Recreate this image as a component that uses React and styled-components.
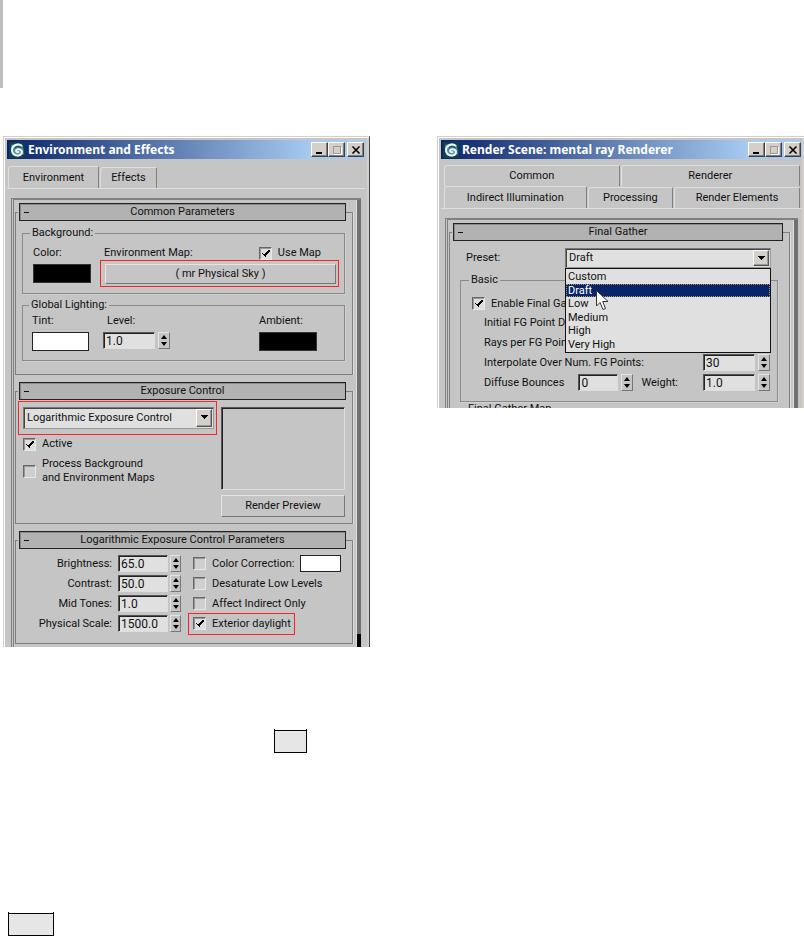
import React from "react";
import styled, { createGlobalStyle, css } from "styled-components";

const GlobalStyle = createGlobalStyle`
  *, *::before, *::after { box-sizing: border-box; }
  body {
    margin: 0;
    background: #fff;
    color: #111;
    font: 11px/14px Roboto, "Liberation Sans", sans-serif;
  }
  button, input, select { font: inherit; color: inherit; }
`;

const grey = "#c5c5c5";
const light = "#dedede";
const dark = "#808080";

const raised = css`
  border: 1px solid;
  border-color: #e4e4e4 #777 #777 #e4e4e4;
`;
const sunken = css`
  border: 1px solid;
  border-color: #555 ${light} ${light} #555;
  box-shadow: inset 1px 1px 0 #222;
`;

const Page = styled.main`
  display: flex;
  flex-direction: column;
`;
const Masthead = styled.header`
  height: 88px;
  margin-bottom: 48px;
  border-left: 3px solid #bfbfbf;
`;
const Figures = styled.section`
  display: grid;
  grid-template-columns: repeat(2, minmax(0, 1fr));
  align-items: start;
  column-gap: 67px;
  padding-left: 3px;
`;
const Window = styled.article`
  display: flex;
  flex-direction: column;
  padding: 3px ${(p) => (p.$cut ? "2px" : "4px")} 0 3px;
  background: ${grey};
  border-left: 1px solid #d4d0c8;
  border-right: ${(p) => (p.$cut ? "0" : "1px solid #444")};
  border-top: 1px solid #d4d0c8;
  box-shadow: inset 1px 1px 0 #fff, inset -2px 0 0 #d4d0c8;
`;
const TitleBar = styled.header`
  display: flex;
  align-items: center;
  height: 19px;
  padding: 0 1px 0 2px;
  background: linear-gradient(90deg, #0a246a, #a6caf0 85%);
`;
const Title = styled.h2`
  flex: 1;
  margin: 0 0 0 3px;
  color: #fff;
  font: bold 12px/18px "Noto Sans", sans-serif;
  white-space: nowrap;
`;
const CaptionButton = styled.button`
  display: grid;
  place-items: center;
  width: 17px;
  height: 15px;
  padding: 0;
  margin-left: ${(p) => (p.$apart ? "2px" : "0")};
  background: #d4d0c8;
  border: 1px solid;
  border-color: #fff #404040 #404040 #fff;
  box-shadow: inset -1px -1px 0 #808080;
`;

const Tabs = styled.div`
  display: flex;
  gap: 1px;
  padding: ${(p) => (p.$wide ? "0 2px 0 3px" : "0 4px 0 1px")};
  border-bottom: ${(p) => (p.$last ? `1px solid ${light}` : "0")};
`;
const TabArea = styled.nav`
  margin: ${(p) => (p.$tight ? "5px" : "7px")} 0 9px;
`;
const Tab = styled.button`
  flex: ${(p) => p.$grow || "0 0 auto"};
  width: ${(p) => p.$width || "auto"};
  height: ${(p) => (p.$active ? "22px" : "21px")};
  margin-top: ${(p) => (p.$active ? "0" : "1px")};
  margin-bottom: ${(p) => (p.$active ? "-1px" : "0")};
  padding: 0;
  white-space: nowrap;
  background: ${grey};
  border: 1px solid;
  border-color: ${light} ${dark} transparent ${light};
  border-bottom: 0;
  border-radius: 3px 2px 0 0;
`;

const Pane = styled.div`
  display: flex;
  margin: 0 4px 0 4px;
  border-top: 2px solid ${dark};
  border-left: 3px double ${dark};
`;
const PaneBody = styled.div`
  flex: 1;
  min-width: 0;
  display: flex;
  flex-direction: column;
  gap: 7px;
  padding: 3px 3px ${(p) => (p.$cut ? "0" : "3px")} 1px;
  border-right: 1px solid ${light};
`;
const Track = styled.div`
  display: flex;
  align-items: flex-end;
  width: 4px;
  background: #707070;
`;
const TrackEnd = styled.div`
  width: 4px;
  height: 13px;
  background: #000;
`;

const Rollout = styled.fieldset`
  min-width: 0;
  margin: 0;
  padding: 0 6px 0 2px;
  border: 1px solid ${dark};
  border-bottom-width: ${(p) => (p.$open ? "0" : "1px")};
  box-shadow: 1px 0 0 ${light};
`;
const RolloutLegend = styled.legend`
  width: 100%;
  padding: 0 0 0 1px;
`;
const RolloutHead = styled.button`
  display: grid;
  grid-template-columns: 12px 1fr 12px;
  align-items: center;
  width: 100%;
  height: 18px;
  padding: 0 4px;
  background: #b2b2b2;
  border: 1px solid #222;
  box-shadow: inset 1px 1px 0 #8a8a8a;
`;
const Dash = styled.span`
  width: 5px;
  height: 1px;
  background: #111;
`;

const Group = styled.fieldset`
  min-width: 0;
  margin: ${(p) => (p.$flush ? "0" : "0 1px 0 4px")};
  padding: ${(p) => p.$pad};
  border: 1px solid #8a8a8a;
  box-shadow: 1px 1px 0 #d0d0d0;
`;
const Legend = styled.legend`
  margin-left: -3px;
  padding: 0 2px;
  line-height: 12px;
`;
const Stack = styled.div`
  display: flex;
  flex-direction: column;
  gap: 5px;
  padding: 6px 0 13px;
`;

const Split = styled.div`
  display: grid;
  grid-template-columns: 67px minmax(0, 1fr);
`;
const Between = styled.div`
  display: flex;
  justify-content: space-between;
  height: 14px;
  padding: 0 18px 0 4px;
`;
const Lighting = styled.div`
  display: grid;
  grid-template-columns: 71px minmax(0, 1fr) 80px;
`;
const Column = styled.div`
  display: flex;
  flex-direction: column;
  align-items: flex-start;
  gap: 4px;
`;
const Label = styled.label`
  padding-left: ${(p) => (p.$inset ? "4px" : "0")};
  white-space: nowrap;
`;
const Swatch = styled.button`
  width: ${(p) => p.$width};
  height: ${(p) => p.$height || "19px"};
  padding: 0;
  background: ${(p) => p.$color};
  border: 1px solid ${(p) => (p.$color === "#000" ? "#333" : "#222")};
`;
const PushButton = styled.button`
  width: 100%;
  height: ${(p) => p.$height};
  padding: 0;
  background: ${grey};
  ${raised}
`;
const Marked = styled.div`
  padding: ${(p) => p.$pad};
  border: 1px solid #f22;
`;

const CheckLabel = styled.label`
  display: inline-flex;
  align-items: center;
  gap: 6px;
  white-space: nowrap;
`;
const MarkedCheck = styled(CheckLabel)`
  justify-self: start;
  margin: -2px 0 -2px -5px;
  padding: 3px 3px 3px 4px;
  border: 1px solid #f22;
`;
const Box = styled.input`
  appearance: none;
  flex: none;
  width: 13px;
  height: 13px;
  margin: 0;
  background: ${(p) => (p.defaultChecked ? light : "#cfcfcf")};
  border: 1px solid;
  border-color: #666 #e8e8e8 #e8e8e8 #666;
  box-shadow: inset 1px 1px 0 #999;
  &:checked {
    background-image: linear-gradient(45deg, transparent 0 34%, #000 34% 52%, transparent 52%),
      linear-gradient(-45deg, transparent 0 36%, #000 36% 60%, transparent 60%);
    background-size: 4px 5px, 6px 6px;
    background-position: 2px 4px, 4px 2px;
    background-repeat: no-repeat;
  }
`;

const NumberWrap = styled.span`
  display: flex;
  gap: ${(p) => (p.$tight ? "2px" : "3px")};
`;
const NumberInput = styled.input`
  width: ${(p) => p.$width};
  height: 17px;
  margin: 0;
  padding: 0 2px;
  font-size: 12px;
  line-height: 15px;
  background: #e0e0e0;
  border-radius: 0;
  ${sunken}
`;
const Spin = styled.span`
  display: flex;
  flex-direction: column;
  width: 12px;
  height: 17px;
  ${raised}
`;
const SpinButton = styled.button`
  flex: 1;
  display: grid;
  place-items: center;
  padding: 0;
  border: 0;
  background: transparent;
`;

const SelectWrap = styled.div`
  position: relative;
  display: flex;
  &::after {
    content: "";
    position: absolute;
    top: 2px;
    right: 2px;
    width: 16px;
    height: calc(100% - 4px);
    pointer-events: none;
    background: linear-gradient(#000, #000) 4px 5px / 7px 1px no-repeat,
      linear-gradient(#000, #000) 5px 6px / 5px 1px no-repeat,
      linear-gradient(#000, #000) 6px 7px / 3px 1px no-repeat,
      linear-gradient(#000, #000) 7px 8px / 1px 1px no-repeat, #d4d0c8;
    border: 1px solid;
    border-color: #fff #555 #555 #fff;
    box-shadow: inset -1px -1px 0 #999;
  }
`;
const Select = styled.select`
  appearance: none;
  width: 100%;
  height: ${(p) => p.$height};
  padding: 0 20px 0 3px;
  background: #e0e0e0;
  border: 1px solid;
  border-color: #777 #999 #999 #777;
  border-radius: 0;
  box-shadow: inset 1px 1px 0 #444;
`;

const Exposure = styled.div`
  display: grid;
  grid-template-columns: 199px minmax(0, 1fr);
  column-gap: 4px;
  padding: 1px 1px 6px 0;
`;
const Checks = styled.div`
  display: flex;
  flex-direction: column;
  align-items: flex-start;
  gap: 6px;
  padding: 2px 5px 0;
`;
const Preview = styled.div`
  display: flex;
  flex-direction: column;
  gap: 5px;
  padding-top: 6px;
`;
const PreviewWell = styled.div`
  height: 83px;
  ${sunken}
`;
const Params = styled.div`
  display: grid;
  grid-template-columns: 94px 63px minmax(0, 1fr);
  grid-auto-rows: 17px;
  align-items: center;
  gap: 3px 6px;
  padding: 6px 0 11px;
  & > label:nth-child(3n + 1) { justify-self: end; }
  & > :nth-child(3n) { padding-left: 6px; }
`;
const InlineRow = styled.div`
  display: flex;
  align-items: center;
  gap: ${(p) => (p.$wide ? "8px" : "5px")};
`;

const GatherStack = styled(Stack)`
  gap: 6px;
  padding: 7px 5px 0 8px;
`;
const PresetRow = styled.div`
  position: relative;
  display: grid;
  grid-template-columns: 99px minmax(0, 1fr);
  align-items: center;
  padding: 0 7px 0 6px;
`;
const Options = styled.ul`
  position: absolute;
  z-index: 1;
  top: 100%;
  left: 105px;
  right: 7px;
  display: grid;
  grid-auto-rows: 1fr;
  height: 85px;
  margin: 0;
  padding: 1px 0;
  list-style: none;
  line-height: 13px;
  background: #e0e0e0;
  border: 1px solid #111;
`;
const Option = styled.li`
  padding-left: 2px;
  color: ${(p) => (p.$selected ? "#fff" : "inherit")};
  background: ${(p) => (p.$selected ? "#0a246a" : "transparent")};
  outline: ${(p) => (p.$selected ? "1px dotted #a99c60" : "0")};
  outline-offset: -1px;
`;
const Pointer = styled.svg`
  position: absolute;
  z-index: 2;
  left: 136px;
  top: 42px;
`;
const Basic = styled.div`
  display: grid;
  grid-template-columns: minmax(0, 1fr) 67px;
  grid-template-rows: 15px;
  grid-auto-rows: 17px;
  row-gap: 3px;
  align-items: center;
  padding-left: 12px;
  & > ${CheckLabel} { grid-column: 1 / 3; margin-left: -12px; }
`;
const WideLabel = styled(Label)`
  grid-column: 1 / 3;
`;
const Bounces = styled.div`
  display: flex;
  align-items: center;
  justify-content: space-between;
  padding-right: 25px;
`;
const CutGroup = styled.div`
  height: 6px;
  margin-top: -6px;
  padding: 0 8px;
  overflow: hidden;
  line-height: 14px;
`;

const Notes = styled.section`
  display: flex;
  flex-direction: column;
  align-items: flex-start;
  gap: 159px;
  padding: 82px 0 0 8px;
`;
const Key = styled.div`
  width: ${(p) => p.$width};
  height: 24px;
  margin-left: ${(p) => p.$indent || "0"};
  border: solid #000;
  border-width: 0 1px 1px;
  background: linear-gradient(#fff 0 1px, #000 1px 2px, #e6e6e6 2px);
`;

function Logo() {
  return (
    <svg width="16" height="16" viewBox="0 0 16 16" aria-hidden="true">
      <rect width="16" height="16" rx="1" fill="#123f4e" />
      <path d="M2 3L9 1L14 4L15 12L9 15L3 13Z" fill="#4b8792" />
      <path d="M12.500 3.500C9 1.300 3.500 3 3 7.500C2.800 12 6.500 14 10 13.300C13.500 12.500 14 8.500 11 7.500C9 6.900 7 7.500 7 9C7 10.200 8.500 10.500 9.500 10" fill="none" stroke="#e9f5f6" strokeWidth="2" strokeLinecap="round" />
      <path d="M6 5.500C8 4 11 4.500 12.500 6" fill="none" stroke="#173f4a" strokeWidth="1" />
    </svg>
  );
}

function WindowTitle({ children }) {
  return (
    <TitleBar>
      <Logo />
      <Title>{children}</Title>
      <CaptionButton aria-label="Minimize">
        <svg width="12" height="10"><path d="M2 8h6" stroke="#000" strokeWidth="2" /></svg>
      </CaptionButton>
      <CaptionButton aria-label="Maximize" disabled>
        <svg width="12" height="10" fill="none"><path d="M2.500 1v7.500h7V1M2 1.500h8" stroke="#999" /><path d="M3 9.500h7.500V2" stroke="#fff" /></svg>
      </CaptionButton>
      <CaptionButton aria-label="Close" $apart>
        <svg width="12" height="10"><path d="M2.500 1.500l7 7M9.500 1.500l-7 7" stroke="#000" strokeWidth="1.600" /></svg>
      </CaptionButton>
    </TitleBar>
  );
}

function Section({ title, open, children }) {
  return (
    <Rollout $open={open}>
      <RolloutLegend>
        <RolloutHead><Dash /><span>{title}</span></RolloutHead>
      </RolloutLegend>
      {children}
    </Rollout>
  );
}

function NumberField({ id, value, width = "52px", tight, label }) {
  return (
    <NumberWrap $tight={tight}>
      <NumberInput id={id} defaultValue={value} $width={width} aria-label={label} />
      <Spin>
        <SpinButton aria-label="Increase"><svg width="6" height="4"><path d="M0 4L3 0L6 4Z" /></svg></SpinButton>
        <SpinButton aria-label="Decrease"><svg width="6" height="4"><path d="M0 0L3 4L6 0Z" /></svg></SpinButton>
      </Spin>
    </NumberWrap>
  );
}

function Check({ checked, children }) {
  return (
    <CheckLabel>
      <Box type="checkbox" defaultChecked={checked} />
      <span>{children}</span>
    </CheckLabel>
  );
}

function EnvironmentWindow() {
  return (
    <Window>
      <WindowTitle>Environment and Effects</WindowTitle>
      <TabArea>
        <Tabs $last>
          <Tab $active $width="91px">Environment</Tab>
          <Tab $width="57px">Effects</Tab>
        </Tabs>
      </TabArea>
      <Pane>
        <PaneBody>
          <Section title="Common Parameters">
            <Stack>
              <Group $pad="7px 5px 6px 10px">
                <Legend>Background:</Legend>
                <Split>
                  <Column>
                    <Label htmlFor="color">Color:</Label>
                    <Swatch id="color" $width="58px" $color="#000" />
                  </Column>
                  <div>
                    <Between>
                      <Label htmlFor="map">Environment Map:</Label>
                      <Check checked>Use Map</Check>
                    </Between>
                    <Marked $pad="3px 2px 2px 4px">
                      <PushButton id="map" $height="20px">( mr Physical Sky )</PushButton>
                    </Marked>
                  </div>
                </Split>
              </Group>
              <Group $pad="3px 5px 9px 9px">
                <Legend>Global Lighting:</Legend>
                <Lighting>
                  <Column>
                    <Label htmlFor="tint">Tint:</Label>
                    <Swatch id="tint" $width="57px" $color="#fff" />
                  </Column>
                  <Column>
                    <Label htmlFor="level" $inset>Level:</Label>
                    <NumberField id="level" value="1.0" />
                  </Column>
                  <Column>
                    <Label htmlFor="ambient">Ambient:</Label>
                    <Swatch id="ambient" $width="58px" $color="#000" />
                  </Column>
                </Lighting>
              </Group>
            </Stack>
          </Section>
          <Section title="Exposure Control">
            <Exposure>
              <div>
                <Marked $pad="5px 2px 5px 4px">
                  <SelectWrap>
                    <Select $height="22px" aria-label="Exposure Control" defaultValue="log">
                      <option value="log">Logarithmic Exposure Control</option>
                    </Select>
                  </SelectWrap>
                </Marked>
                <Checks>
                  <Check checked>Active</Check>
                  <Check>Process Background<br />and Environment Maps</Check>
                </Checks>
              </div>
              <Preview>
                <PreviewWell />
                <PushButton $height="22px">Render Preview</PushButton>
              </Preview>
            </Exposure>
          </Section>
          <Section title="Logarithmic Exposure Control Parameters">
            <Params>
              <Label htmlFor="brightness">Brightness:</Label>
              <NumberField id="brightness" value="65.0" width="50px" tight />
              <InlineRow>
                <Check>Color Correction:</Check>
                <Swatch $width="41px" $height="17px" $color="#fff" aria-label="Correction color" />
              </InlineRow>
              <Label htmlFor="contrast">Contrast:</Label>
              <NumberField id="contrast" value="50.0" width="50px" tight />
              <InlineRow><Check>Desaturate Low Levels</Check></InlineRow>
              <Label htmlFor="tones">Mid Tones:</Label>
              <NumberField id="tones" value="1.0" width="50px" tight />
              <InlineRow><Check>Affect Indirect Only</Check></InlineRow>
              <Label htmlFor="scale">Physical Scale:</Label>
              <NumberField id="scale" value="1500.0" width="50px" tight />
              <InlineRow>
                <MarkedCheck>
                  <Box type="checkbox" defaultChecked />
                  <span>Exterior daylight</span>
                </MarkedCheck>
              </InlineRow>
            </Params>
          </Section>
        </PaneBody>
        <Track><TrackEnd /></Track>
      </Pane>
    </Window>
  );
}

const presets = ["Custom", "Draft", "Low", "Medium", "High", "Very High"];

function RenderWindow() {
  return (
    <Window $cut>
      <WindowTitle>Render Scene: mental ray Renderer</WindowTitle>
      <TabArea $tight>
        <Tabs $wide>
          <Tab $grow="175">Common</Tab>
          <Tab $grow="179">Renderer</Tab>
        </Tabs>
        <Tabs $wide $last>
          <Tab $active $grow="143">Indirect Illumination</Tab>
          <Tab $grow="85">Processing</Tab>
          <Tab $grow="126">Render Elements</Tab>
        </Tabs>
      </TabArea>
      <Pane>
        <PaneBody $cut>
          <Section title="Final Gather" open>
            <GatherStack>
              <PresetRow>
                <Label htmlFor="preset">Preset:</Label>
                <SelectWrap>
                  <Select id="preset" $height="20px" defaultValue="Draft">
                    {presets.map((name) => <option key={name}>{name}</option>)}
                  </Select>
                </SelectWrap>
                <Options role="listbox" aria-label="Preset">
                  {presets.map((name) => (
                    <Option key={name} role="option" aria-selected={name === "Draft"} $selected={name === "Draft"}>{name}</Option>
                  ))}
                </Options>
                <Pointer width="13" height="21" viewBox="0 0 13 21" aria-hidden="true">
                  <path d="M0.500 0.500V16L4 12.500L7 19.500L9.500 18.500L6.700 11.500H12Z" fill="#fff" stroke="#333" />
                </Pointer>
              </PresetRow>
              <Group $flush $pad="10px 7px 10px 11px">
                <Legend>Basic</Legend>
                <Basic>
                  <Check checked>Enable Final Gather</Check>
                  <WideLabel as="span">Initial FG Point Density:</WideLabel>
                  <WideLabel as="span">Rays per FG Point:</WideLabel>
                  <Label htmlFor="points">Interpolate Over Num. FG Points:</Label>
                  <NumberField id="points" value="30" />
                  <Bounces>
                    <Label htmlFor="bounces">Diffuse Bounces</Label>
                    <InlineRow $wide>
                      <NumberField id="bounces" value="0" width="40px" />
                      <Label htmlFor="weight">Weight:</Label>
                    </InlineRow>
                  </Bounces>
                  <NumberField id="weight" value="1.0" />
                </Basic>
              </Group>
              <CutGroup>Final Gather Map</CutGroup>
            </GatherStack>
          </Section>
        </PaneBody>
        <Track />
      </Pane>
    </Window>
  );
}

export default function App() {
  return (
    <>
      <GlobalStyle />
      <Page>
        <Masthead />
        <Figures>
          <EnvironmentWindow />
          <RenderWindow />
        </Figures>
        <Notes>
          <Key $width="33px" $indent="266px" />
          <Key $width="46px" />
        </Notes>
      </Page>
    </>
  );
}
